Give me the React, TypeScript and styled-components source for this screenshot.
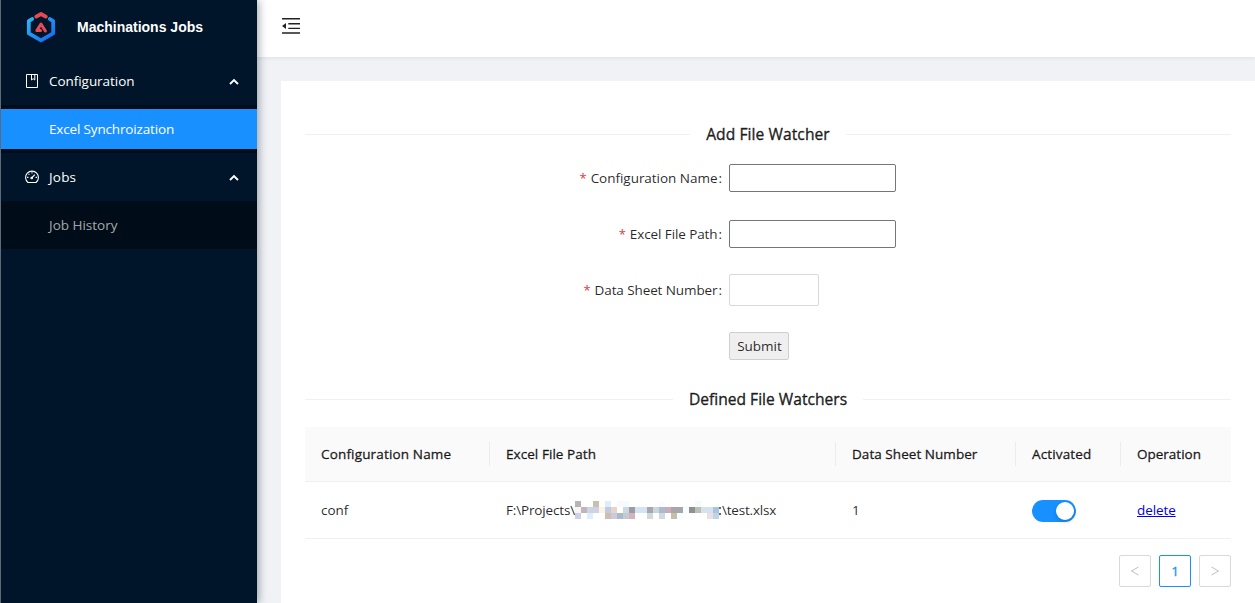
import React from "react";
import styled, { createGlobalStyle } from "styled-components";

const Global = createGlobalStyle`
  * { box-sizing: border-box; }
  body { margin: 0; background: #f0f2f5; overflow: hidden;
    font-family: "Open Sans", "Noto Sans", sans-serif; font-size: 13.5px; line-height: 22px; color: rgba(0,0,0,.85); }
`;
const Layout = styled.div`display: flex; width: 1255px; height: 603px; overflow: hidden;`;
const Sider = styled.aside`
  width: 257px; flex: none; background: #001529; border-left: 1px solid #5d6b78;
  box-shadow: 2px 0 8px rgba(0,21,41,.35); position: relative; z-index: 2;
`;
const Brand = styled.div`
  display: flex; align-items: center; height: 57px; padding: 0 0 3px 24px; gap: 20px;
  font: bold 14px/20px "Liberation Sans", sans-serif; color: #fff;
`;
const MenuTitle = styled.div`
  display: flex; align-items: center; height: 48px; padding: 0 18px 0 24px; color: #fff;
  svg { flex: none; }
`;
const Label = styled.span<{ $ls?: number }>`white-space: nowrap; letter-spacing: ${p => p.$ls ?? 0}px;`;
const MenuLabel = styled(Label)`flex: 1; margin-left: 10px;`;
const SubMenu = styled.div`background: #000c17; padding: 4px 0;`;
const SubItem = styled.div<{ $active?: boolean }>`
  height: 40px; line-height: 40px; padding-left: 48px;
  background: ${p => (p.$active ? "#1890ff" : "transparent")};
  color: ${p => (p.$active ? "#fff" : "rgba(255,255,255,.65)")};
`;
const Main = styled.main`flex: 1; min-width: 0; display: flex; flex-direction: column;`;
const Header = styled.header`
  height: 57px; flex: none; background: #fff; padding: 16px 24px; box-shadow: 0 1px 4px rgba(0,21,41,.08);
`;
const Content = styled.section`margin: 24px 0 0 24px; padding: 40px 24px 0; background: #fff; flex: 1;`;
const Divider = styled.h2`
  display: flex; align-items: center; gap: 16px; margin: 0; height: 26px; font-size: 15.6px; font-weight: 400; white-space: nowrap;
  -webkit-text-stroke: 0.4px currentColor;
  &::before, &::after { content: ""; flex: 1; height: 1px; background: #f0f0f0; }
`;
const Form = styled.form`padding-top: 15px; height: 239px; display: flex; flex-direction: column; gap: 24px;`;
const FormRow = styled.div`display: flex; align-items: center; height: 32px;`;
const FormLabel = styled.label`
  width: 424px; padding-right: 7px; display: flex; justify-content: flex-end; white-space: nowrap;
  &::before { content: "*"; color: #e0393e; margin-right: 4px; font-size: 13px; }
  &::after { content: ":"; margin-left: 1px; }
`;
const TextInput = styled.input`width: 167px; height: 28px; border: 1px solid #767676; border-radius: 2px; padding: 1px 4px;`;
const NumberInput = styled.input`width: 90px; height: 32px; border: 1px solid #d9d9d9; border-radius: 2px; padding: 4px;`;
const Submit = styled.button`
  width: 60px; height: 28px; margin-left: 424px; padding: 0 0 0 1px; border: 1px solid #cfcfcf; border-radius: 2px;
  background: #efefef; font: inherit; color: rgba(0,0,0,.85);
`;
const Table = styled.div`margin-top: 15px;`;
const Row = styled.div`
  display: grid; grid-template-columns: 185px 346px 180px 105px 110px; align-items: center; height: 57px;
  border-bottom: 1px solid #f0f0f0;
`;
const HeadRow = styled(Row)`height: 55px; background: #fafafa; -webkit-text-stroke: 0.35px currentColor; border-radius: 2px 2px 0 0;`;
const Cell = styled.div`padding-left: 16px; display: flex; align-items: center; white-space: nowrap;`;
const HeadCell = styled(Cell)<{ $ls?: number }>`
  height: 24px; border-right: 1px solid #ececec; letter-spacing: ${p => p.$ls ?? 0}px;
  &:last-child { border-right: 0; }
`;
const PathStart = styled(Label)`width: 69px;`;
const SwitchTrack = styled.span`
  width: 44px; height: 22px; margin-top: 2px; border-radius: 11px; background: #1890ff; padding: 2px; display: flex; justify-content: flex-end;
  &::after { content: ""; width: 18px; height: 18px; border-radius: 50%; background: #fff; box-shadow: 0 2px 4px rgba(0,35,11,.2); }
`;
const Link = styled.a`color: #0000ee; text-decoration: underline; letter-spacing: -0.1px;`;
const Pager = styled.nav`display: flex; justify-content: flex-end; gap: 8px; margin-top: 16px;`;
const PageBox = styled.button<{ $active?: boolean }>`
  width: 32px; height: 32px; padding: 0; display: grid; place-items: center; background: #fff; border-radius: 2px; font: inherit;
  border: 1px solid ${p => (p.$active ? "#1890ff" : "#d9d9d9")}; color: ${p => (p.$active ? "#1890ff" : "rgba(0,0,0,.25)")};
  -webkit-text-stroke: 0.3px currentColor;
`;

const Logo = () => (
  <svg width="32" height="34" viewBox="0 0 32 34" fill="none" strokeLinejoin="round">
    <defs><linearGradient id="lg" x1="0" y1="0" x2="1" y2="1"><stop stopColor="#2fb4f5" /><stop offset="1" stopColor="#1767f0" /></linearGradient></defs>
    <path d="M7.2 9 3.8 11.2V23.3L16 30.3L28.2 23.3V11.2L24.8 9" stroke="url(#lg)" strokeWidth="3.8" strokeLinecap="round" />
    <path d="M11.2 6.6 16 4 20.8 6.6" stroke="#e64b55" strokeWidth="3.8" strokeLinecap="round" />
    <path d="M15.5 20.6H11.8L16 14L20.4 21" stroke="#e64b55" strokeWidth="3" strokeLinecap="round" />
  </svg>
);
const Caret = () => (
  <svg width="10" height="10" viewBox="0 0 10 10" fill="none" stroke="#fff" strokeWidth="1.9"><path d="M1 8 5 4 9 8" /></svg>
);
const BookIcon = () => (
  <svg width="14" height="16" viewBox="0 0 14 16" fill="none" stroke="#fff"><path d="M1.5 1.5H12.5V14.5H1.5ZM6.5 2V7L8.2 5.7L9.8 7V2" /></svg>
);
const GaugeIcon = () => (
  <svg width="14" height="14" viewBox="0 0 14 14" fill="none" stroke="#fff" strokeWidth="1.1">
    <path d="M3 12.5A6.4 6.4 0 1 1 11 12.5ZM7 2.2V3.6M3.5 3.8 4.4 4.7M2 7.4H3.4M10.6 7.4H12M6.6 8 9.8 4.6" /><circle cx="6.7" cy="8" r=".8" />
  </svg>
);
const FoldIcon = () => (
  <svg width="20" height="20" viewBox="0 0 20 20" fill="#222"><path d="M1 2H19V3.6H1ZM7.3 7H19V8.4H7.3ZM7.3 11.7H19V13.1H7.3ZM1 16.2H19V17.8H1ZM1 10 5 7V13Z" /></svg>
);
const Arrow = ({ right }: { right?: boolean }) => (
  <svg width="10" height="12" viewBox="0 0 10 12" fill="none" stroke="#bfbfbf"><path d={right ? "M1.5 2 8.5 6 1.5 10" : "M8.5 2 1.5 6 8.5 10"} /></svg>
);

/* Redacted part of the path: rows of 6px blocks, "-" is an empty block. */
const blocks = [
  "b5b5b7 - - c6c0ae - ddeefa - f9f9fb f4fbff - - - - - fafdff - - - - - f4fbff - - -",
  "f7f6f4 c0b5bb cdd2e4 cdd2e4 fdf3e4 bccce3 ecd3c6 - cfd6e0 9b9ca6 d3e5f2 d3e5f2 a9a7ad cbd6dc a9bccb cdaab5 aaa5ad aaa5ad f8feff 8c9292 bebfb3 d3e2ec d3e2ec a9c4de",
  "ccd2e4 - dceefb - - cfbdb3 c8cbe0 aabacb c4cad0 d6b3bc - - cfdadf - cfdadf - c6bfa8 f4fdff - - - - ecdfe4 c0d4e4",
].map(r => r.split(" "));
const Mosaic = () => (
  <svg width="147" height="18" shapeRendering="crispEdges">
    {blocks.map((row, y) => row.map((c, x) => c !== "-" && <rect key={`${x}-${y}`} x={x * 6} y={y * 6} width="6" height="6" fill={`#${c}`} />))}
    <path d="M144 6h1.5v2h-1.5zM144 12h1.5v2h-1.5z" fill="#4f6f98" />
  </svg>
);

const App = () => (
  <Layout>
    <Global />
    <Sider>
      <Brand><Logo />Machinations Jobs</Brand>
      <MenuTitle><BookIcon /><MenuLabel $ls={-0.05}>Configuration</MenuLabel><Caret /></MenuTitle>
      <SubMenu><SubItem $active><Label $ls={-0.16}>Excel Synchroization</Label></SubItem></SubMenu>
      <MenuTitle><GaugeIcon /><MenuLabel $ls={0.2}>Jobs</MenuLabel><Caret /></MenuTitle>
      <SubMenu><SubItem><Label>Job History</Label></SubItem></SubMenu>
    </Sider>
    <Main>
      <Header><FoldIcon /></Header>
      <Content>
        <Divider><Label $ls={0.07}>Add File Watcher</Label></Divider>
        <Form>
          <FormRow><FormLabel><Label $ls={-0.03}>Configuration Name</Label></FormLabel><TextInput /></FormRow>
          <FormRow><FormLabel><Label $ls={-0.1}>Excel File Path</Label></FormLabel><TextInput /></FormRow>
          <FormRow><FormLabel><Label $ls={-0.1}>Data Sheet Number</Label></FormLabel><NumberInput /></FormRow>
          <FormRow><Submit type="button">Submit</Submit></FormRow>
        </Form>
        <Divider><Label>Defined File Watchers</Label></Divider>
        <Table>
          <HeadRow>
            <HeadCell $ls={0.16}>Configuration Name</HeadCell><HeadCell $ls={0.06}>Excel File Path</HeadCell>
            <HeadCell $ls={0.05}>Data Sheet Number</HeadCell><HeadCell $ls={0.15}>Activated</HeadCell><HeadCell>Operation</HeadCell>
          </HeadRow>
          <Row>
            <Cell>conf</Cell>
            <Cell><PathStart $ls={-0.15}>F:\Projects\</PathStart><Mosaic /><Label $ls={-0.2}>\test.xlsx</Label></Cell>
            <Cell>1</Cell><Cell><SwitchTrack /></Cell><Cell><Link>delete</Link></Cell>
          </Row>
        </Table>
        <Pager><PageBox><Arrow /></PageBox><PageBox $active>1</PageBox><PageBox><Arrow right /></PageBox></Pager>
      </Content>
    </Main>
  </Layout>
);
export default App;
